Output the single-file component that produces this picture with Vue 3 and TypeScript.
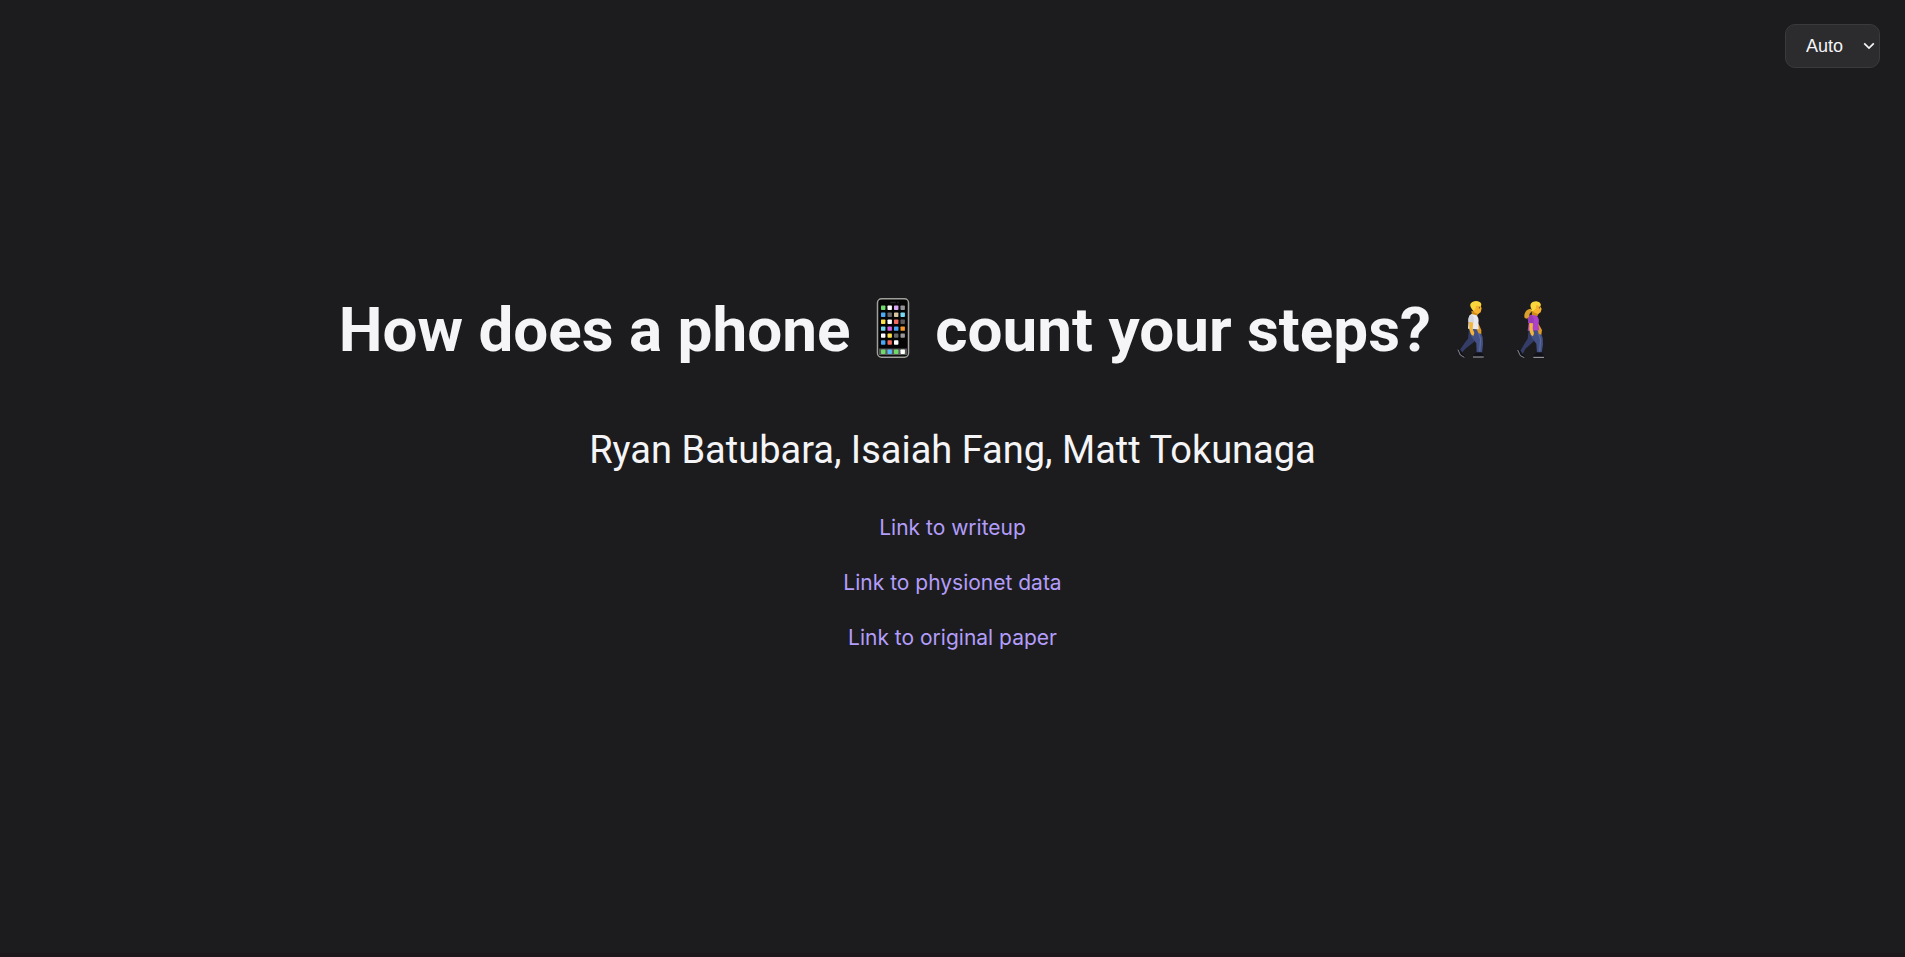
<script setup lang="ts">
import { ref } from 'vue'

type Theme = 'auto' | 'light' | 'dark'

const theme = ref<Theme>('auto')

const links = [
  { label: 'Link to writeup', href: '#writeup' },
  { label: 'Link to physionet data', href: '#physionet' },
  { label: 'Link to original paper', href: '#paper' },
]

const appRows: string[][] = [
  ['#6edb68', '#ffffff', '#d9a6f5', '#949496'],
  ['#4aa8f5', '#68686a', '#d8c4a0', '#74d8f5'],
  ['#fbe04a', '#ffffff', '#f06a5c', '#5c5c5e'],
  ['#6ed6ea', '#cf5fe0', '#48a6f5', '#f7982c'],
  ['#ffffff', '#fbe04a', '#68686a', '#98989a'],
  ['#48a6f5', '#f06a5c', '#ffffff'],
]
const dock: string[] = ['#6edb68', '#55b9f5', '#6edb68', '#ffffff']
</script>

<template>
  <div class="page">
    <header class="toolbar">
      <div class="theme">
        <select v-model="theme" class="theme-select" aria-label="Color theme">
          <option value="auto">Auto</option>
          <option value="light">Light</option>
          <option value="dark">Dark</option>
        </select>
        <svg class="chevron" viewBox="0 0 12 8" aria-hidden="true">
          <path d="M1.2 1.3 6 6.1 10.8 1.3" />
        </svg>
      </div>
    </header>

    <main class="hero">
      <h1 class="title">
        How does a phone
        <svg class="phone" viewBox="3 0 54 60" role="img" aria-label="mobile phone">
          <rect x="14.5" y=".8" width="31" height="58.4" rx="4" fill="#050506" stroke="#a09f9b" stroke-width="1.5" />
          <rect x="27" y="3.8" width="6" height="1.4" rx=".7" fill="#242427" />
          <circle cx="35" cy="4.5" r=".9" fill="#242427" />
          <g v-for="(row, r) in appRows" :key="r">
            <rect
              v-for="(color, c) in row"
              :key="c"
              :x="18 + c * 6.5"
              :y="7.6 + r * 6.95"
              width="4.4"
              height="4.4"
              rx=".7"
              :fill="color"
            />
          </g>
          <rect x="16" y="50.5" width="28" height="6.6" fill="#59595c" />
          <rect
            v-for="(color, c) in dock"
            :key="'d' + c"
            :x="18 + c * 6.5"
            y="51.6"
            width="4.4"
            height="4.4"
            rx=".7"
            :fill="color"
          />
        </svg>
        count your steps?
        <span class="walkers">
          <svg class="walker" viewBox="-24 0 180 180" role="img" aria-label="man walking">
            <path d="M45 92 72 94 70 116 60 132 34 152 24 164 16 158 34 132 42 122Z" fill="#343c68" />
            <path d="M46 92 76 92 86 118 87 138 84 166 68 166 67 136 52 116Z" fill="#435084" />
            <path d="M72 100 80 124 77 160" fill="none" stroke="#596799" stroke-width="4" />
            <path d="M14 152 22 159 26 168 33 174 30 178 20 172 12 158Z" fill="#101119" />
            <path d="M12 155 19 171 31 178" fill="none" stroke="#c6c7ce" stroke-width="2" />
            <path d="M68 163 83 163 89 174 88 177 57 177 58 172Z" fill="#101119" />
            <path d="M57 177H89" fill="none" stroke="#c6c7ce" stroke-width="2.5" />
            <path d="M52 38 75 44 69 54 54 53Z" fill="#d18c18" />
            <path d="M67 64 75 80 82 96 82 108 74 106 67 92Z" fill="#db9827" />
            <path d="M52 48 68 52Q76 61 73 76L74 94 42 92 44 61Q45 51 52 48Z" fill="#e9e9ef" />
            <path d="M45 69 58 70 56 92 61 105 58 114 51 109 46 94Z" fill="#f3b638" />
            <path d="M43 71Q42 51 53 51 62 54 59 74Z" fill="#d6d7e0" />
            <path d="M55 20 78 14 81 26 83 31 80 43 72 48 60 43 55 34Z" fill="#f5b22f" />
            <path d="M52 31Q44 18 55 12 67 6 77 12 84 16 81 24L66 23 64 34 58 38Z" fill="#fbd53c" />
            <ellipse cx="76" cy="29" rx="1.5" ry="2.5" fill="#64400d" />
          </svg>
          <svg class="walker" viewBox="-21 0 180 180" role="img" aria-label="woman walking">
            <path d="M47 96 76 96 70 118 60 132 37 153 29 168 20 162 36 134 44 122Z" fill="#343c68" />
            <path d="M48 95 79 94 89 119 90 139 86 166 72 166 70 137 55 118Z" fill="#435084" />
            <path d="M75 102 83 125 80 160" fill="none" stroke="#596799" stroke-width="4" />
            <path d="M17 154 24 160 29 169 36 175 33 178 23 173 14 159Z" fill="#101119" />
            <path d="M14 156 22 173 34 179" fill="none" stroke="#c6c7ce" stroke-width="2" />
            <path d="M72 163 86 163 93 173 93 177 61 177 62 172Z" fill="#101119" />
            <path d="M61 178H93" fill="none" stroke="#c6c7ce" stroke-width="2.5" />
            <path d="M56 38 78 45 72 56 57 54Z" fill="#d18c18" />
            <path d="M70 65 78 80 87 96 85 110 78 108 72 92Z" fill="#db9827" />
            <path d="M53 50 71 53Q81 62 76 78L79 97 44 98 47 75 44 64Q45 53 53 50Z" fill="#ad42c8" />
            <path d="M49 73 60 73 59 93 63 106 60 115 54 111 49 96Z" fill="#f3b638" />
            <path d="M45 75Q44 54 55 52 64 55 62 76Z" fill="#963bb3" />
            <path d="M58 20 80 16 82 26 86 32 83 43 75 48 62 43 57 34Z" fill="#f5b22f" />
            <path d="M53 32Q40 34 37 43 32 51 35 60L42 62Q50 56 50 47L58 38Z" fill="#d9a02c" />
            <path d="M56 35Q47 18 59 12 72 6 81 14 86 20 82 25L70 21 68 32 60 40 53 38Z" fill="#fbd53c" />
            <ellipse cx="79" cy="29" rx="1.5" ry="2.5" fill="#64400d" />
          </svg>
        </span>
      </h1>
      <p class="authors">Ryan Batubara, Isaiah Fang, Matt Tokunaga</p>
      <nav class="links" aria-label="Resources">
        <a v-for="link in links" :key="link.href" :href="link.href">{{ link.label }}</a>
      </nav>
    </main>
  </div>
</template>

<style>
body {
  background: #1c1c1e;
}
</style>

<style scoped>
.page {
  box-sizing: border-box;
  min-height: 100vh;
  display: flex;
  flex-direction: column;
  background: #1c1c1e;
  color: #f5f5f7;
  font-family: Inter, "Liberation Sans", sans-serif;
  border-bottom: 4px solid #1c171a;
}

.toolbar {
  display: flex;
  justify-content: flex-end;
  padding: 24px 25px 0;
}

.theme {
  display: grid;
  align-items: center;
}

.theme-select,
.chevron {
  grid-area: 1 / 1;
}

.theme-select {
  appearance: none;
  box-sizing: border-box;
  height: 44px;
  padding: 0 32px 0 20px;
  border: 1px solid #3a3a3c;
  border-radius: 10px;
  background: #2c2c2e;
  color: #f5f5f7;
  font-family: "Liberation Sans", sans-serif;
  font-size: 18px;
  width: 95px;
}

.chevron {
  justify-self: end;
  width: 12px;
  height: 8px;
  margin-right: 5px;
  fill: none;
  stroke: #f5f5f7;
  stroke-width: 1.7;
  pointer-events: none;
}

.hero {
  display: flex;
  flex-direction: column;
  align-items: center;
  padding: 226px 24px 0;
  text-align: center;
}

.title,
.authors {
  font-family: Roboto, Inter, sans-serif;
}

.title {
  margin: 0;
  font-size: 62px;
  font-weight: 700;
  line-height: 72px;
}

.phone {
  width: 54px;
  height: 60px;
  vertical-align: -7px;
}

.walkers {
  display: inline-flex;
  vertical-align: -7px;
}

.walker {
  width: 60px;
  height: 60px;
}

.authors {
  margin: 56px 0 0;
  font-size: 38px;
  line-height: 56px;
}

.links {
  display: flex;
  flex-direction: column;
  align-items: center;
  gap: 23px;
  margin-top: 34px;
  font-size: 21px;
  line-height: 32px;
}

.links a {
  color: #b39dfa;
  text-decoration: none;
}
</style>
